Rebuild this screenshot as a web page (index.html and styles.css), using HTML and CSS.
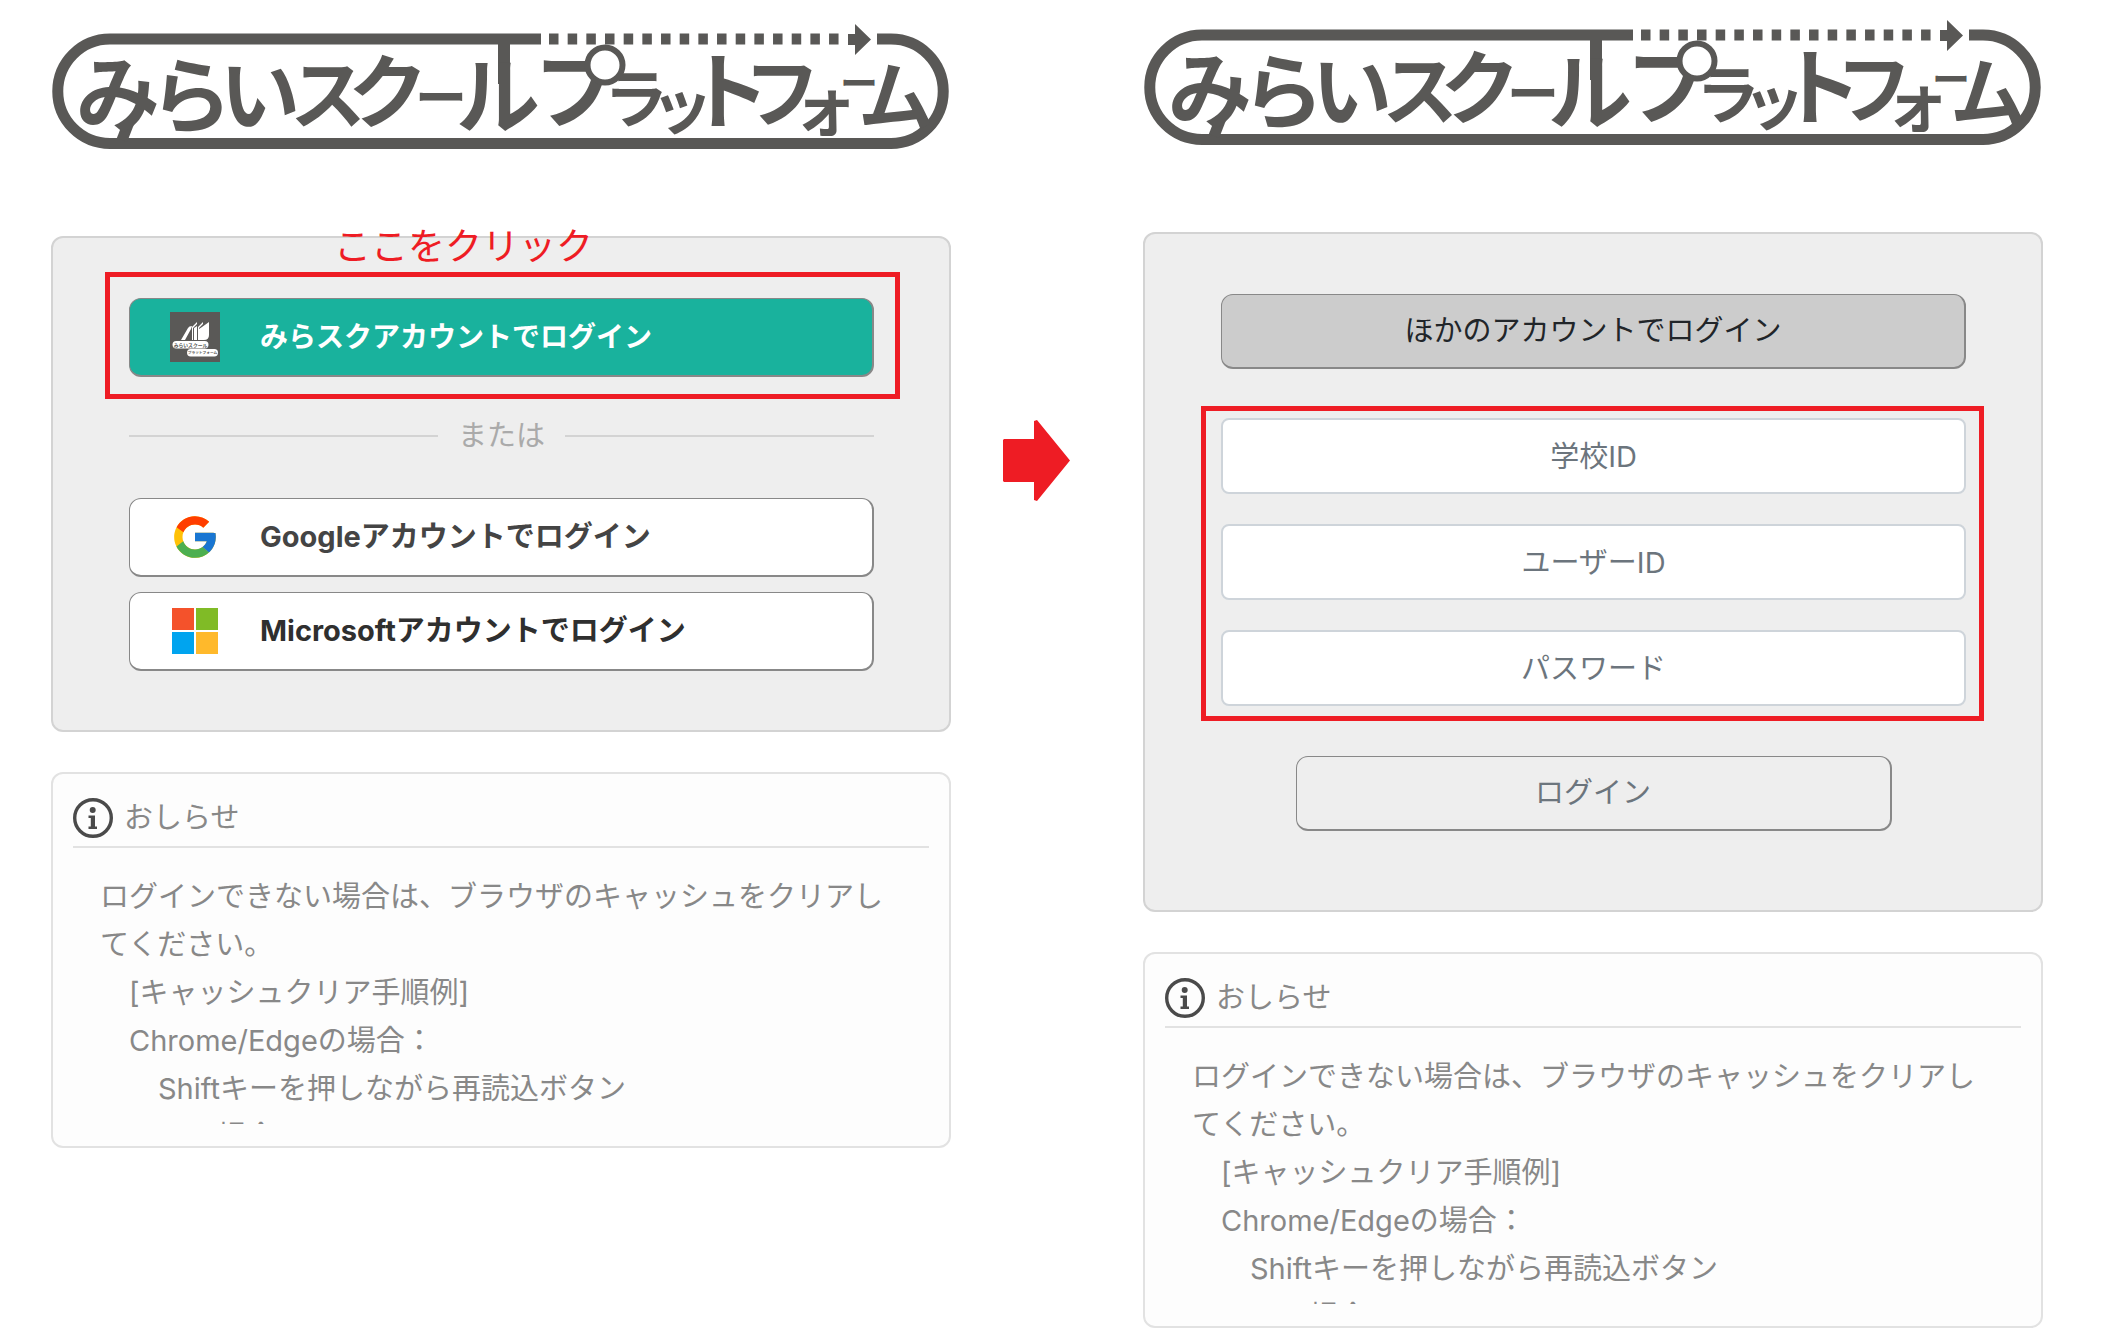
FILE: index.html
```html
<!DOCTYPE html>
<html lang="ja">

<head>
    <meta charset="UTF-8">
    <meta name="viewport" content="width=device-width, initial-scale=1.0">
    <title>みらいスクールプラットフォーム</title>
    <link rel="stylesheet" href="styles.css">
</head>

<body>
    <div class="page">
        <div class="column column-select">
            <svg class="logo" viewBox="0 0 900 130">
                <g fill="none" stroke="#595856" stroke-width="11">
                    <path d="M490 15H59a52 52 0 0 0 0 104.500H840a52 52 0 0 0 0-104.500H826" />
                    <path d="M498 15H790" stroke-dasharray="9.500 9.170" />
                    <path d="M453 15V60" stroke-width="12" />
                    <path d="M78 98L71 116" />
                </g>
                <path d="M797 10h7V0l16 15.500L804 31V21h-7z" fill="#595856" />
                <text class="logo-text"><tspan x="25" y="102" font-size="84">み</tspan><tspan x="99" y="102" font-size="82">ら</tspan><tspan x="169" y="100" font-size="80">い</tspan><tspan x="239" y="99" font-size="76">ス</tspan><tspan x="297" y="97" font-size="80">ク</tspan><tspan x="364" y="93" font-size="52">ー</tspan><tspan x="405" y="103" font-size="84">ル</tspan><tspan x="484" y="97" font-size="84">プ</tspan><tspan x="553" y="98" font-size="64">ラ</tspan><tspan x="600" y="105" font-size="62">ッ</tspan><tspan x="635" y="98" font-size="84">ト</tspan><tspan x="693" y="97" font-size="76">フ</tspan><tspan x="742" y="106" font-size="64">ォ</tspan><tspan x="789" y="73" font-size="38">ー</tspan><tspan x="807" y="101" font-size="76">ム</tspan></text>
                <circle cx="554" cy="41" r="17.500" fill="#fff" stroke="#595856" stroke-width="6" />
            </svg>
            <div class="panel">
                <div class="target target-button">
                    <span class="callout">ここをクリック</span>
                    <button type="button" class="btn btn-account btn-mirai">
                        <svg class="icon" viewBox="0 0 50 50">
                            <path fill="#5a5957" d="M0 0h50v50H0z" />
                            <path fill="#fff" d="M11 28l7-12q1-2 4-2l-1 3-6 11zM22 15l5-5v2l-4 4v12h-1zM24 16l3-2v14h-3zM28 15l5-5v2l-4 4v12h-1zM29 17l3-2 7-5v13q0 5-5 5h-5z" />
                            <rect x="2.500" y="29" width="36" height="7.500" rx="3.700" fill="#fff" />
                            <rect x="17" y="37" width="31" height="7.500" rx="3.700" fill="#fff" />
                            <text x="20.500" y="34.500" font-size="4.800" class="icon-text">みらいスクール</text>
                            <text x="32.500" y="42.200" font-size="3.700" class="icon-text">プラットフォーム</text>
                        </svg>
                        <span>みらスクアカウントでログイン</span>
                    </button>
                </div>
                <div class="divider"><span>または</span></div>
                <div class="accounts">
                    <button type="button" class="btn btn-account btn-google">
                        <svg class="icon" viewBox="0 0 48 48">
                            <path fill="#FFC107" d="M43.611 20.083H42V20H24v8h11.303C33.654 32.657 29.223 36 24 36c-6.627 0-12-5.373-12-12s5.373-12 12-12c3.059 0 5.842 1.154 7.961 3.039l5.657-5.657C34.046 6.053 29.268 4 24 4 12.955 4 4 12.955 4 24s8.955 20 20 20 20-8.955 20-20c0-1.341-.138-2.650-.389-3.917z" />
                            <path fill="#FF3D00" d="M6.306 14.691l6.571 4.819C14.655 15.108 18.961 12 24 12c3.059 0 5.842 1.154 7.961 3.039l5.657-5.657C34.046 6.053 29.268 4 24 4 16.318 4 9.656 8.337 6.306 14.691z" />
                            <path fill="#4CAF50" d="M24 44c5.166 0 9.860-1.977 13.409-5.192l-6.190-5.238C29.211 35.091 26.715 36 24 36c-5.202 0-9.619-3.317-11.283-7.946l-6.522 5.025C9.505 39.556 16.227 44 24 44z" />
                            <path fill="#1976D2" d="M43.611 20.083H42V20H24v8h11.303c-.792 2.237-2.231 4.166-4.087 5.571l6.193 5.238C36.971 39.205 44 34 44 24c0-1.341-.138-2.650-.389-3.917z" />
                        </svg>
                        <span>Googleアカウントでログイン</span>
                    </button>
                    <button type="button" class="btn btn-account btn-microsoft">
                        <svg class="icon" viewBox="0 0 50 50">
                            <path fill="#f4522b" d="M2 2h22v22H2z" />
                            <path fill="#80bb26" d="M26 2h22v22H26z" />
                            <path fill="#00a4ef" d="M2 26h22v22H2z" />
                            <path fill="#ffb92b" d="M26 26h22v22H26z" />
                        </svg>
                        <span>Microsoftアカウントでログイン</span>
                    </button>
                </div>
            </div>
            <div class="notice">
                <h2 class="notice-title">
                    <svg class="info-icon" viewBox="0 0 40 40">
                        <circle cx="20" cy="20" r="18.300" fill="none" stroke="#4a4a4a" stroke-width="3.400" />
                        <circle cx="19.700" cy="12" r="3" fill="#4a4a4a" />
                        <path d="M15.500 17.500h6.500v11h2v2.500h-8.500v-2.500h2.300v-8.500h-2.300z" fill="#4a4a4a" />
                    </svg>
                    おしらせ
                </h2>
                <div class="notice-body">ログインできない場合は、ブラウザのキャッシュをクリアしてください。
　[キャッシュクリア手順例]
　Chrome/Edgeの場合：
　　Shiftキーを押しながら再読込ボタン
　iPadの場合：</div>
            </div>
        </div>

        <div class="next">
            <svg width="67" height="81" viewBox="0 0 67 81"><path fill="#ee1c24" d="M1 19h30V1l3-1 33 40.500L34 81l-3-1V62H1l-1-1V20z" /></svg>
        </div>

        <div class="column">
            <svg class="logo" viewBox="0 0 900 130">
                <g fill="none" stroke="#595856" stroke-width="11">
                    <path d="M490 15H59a52 52 0 0 0 0 104.500H840a52 52 0 0 0 0-104.500H826" />
                    <path d="M498 15H790" stroke-dasharray="9.500 9.170" />
                    <path d="M453 15V60" stroke-width="12" />
                    <path d="M78 98L71 116" />
                </g>
                <path d="M797 10h7V0l16 15.500L804 31V21h-7z" fill="#595856" />
                <text class="logo-text"><tspan x="25" y="102" font-size="84">み</tspan><tspan x="99" y="102" font-size="82">ら</tspan><tspan x="169" y="100" font-size="80">い</tspan><tspan x="239" y="99" font-size="76">ス</tspan><tspan x="297" y="97" font-size="80">ク</tspan><tspan x="364" y="93" font-size="52">ー</tspan><tspan x="405" y="103" font-size="84">ル</tspan><tspan x="484" y="97" font-size="84">プ</tspan><tspan x="553" y="98" font-size="64">ラ</tspan><tspan x="600" y="105" font-size="62">ッ</tspan><tspan x="635" y="98" font-size="84">ト</tspan><tspan x="693" y="97" font-size="76">フ</tspan><tspan x="742" y="106" font-size="64">ォ</tspan><tspan x="789" y="73" font-size="38">ー</tspan><tspan x="807" y="101" font-size="76">ム</tspan></text>
                <circle cx="554" cy="41" r="17.500" fill="#fff" stroke="#595856" stroke-width="6" />
            </svg>
            <form class="panel">
                <button type="button" class="btn btn-other">ほかのアカウントでログイン</button>
                <div class="target target-fields">
                    <input class="field" type="text" placeholder="学校ID" aria-label="学校ID">
                    <input class="field" type="text" placeholder="ユーザーID" aria-label="ユーザーID">
                    <input class="field" type="password" placeholder="パスワード" aria-label="パスワード">
                </div>
                <button type="button" class="btn btn-login">ログイン</button>
            </form>
            <div class="notice">
                <h2 class="notice-title">
                    <svg class="info-icon" viewBox="0 0 40 40">
                        <circle cx="20" cy="20" r="18.300" fill="none" stroke="#4a4a4a" stroke-width="3.400" />
                        <circle cx="19.700" cy="12" r="3" fill="#4a4a4a" />
                        <path d="M15.500 17.500h6.500v11h2v2.500h-8.500v-2.500h2.300v-8.500h-2.300z" fill="#4a4a4a" />
                    </svg>
                    おしらせ
                </h2>
                <div class="notice-body">ログインできない場合は、ブラウザのキャッシュをクリアしてください。
　[キャッシュクリア手順例]
　Chrome/Edgeの場合：
　　Shiftキーを押しながら再読込ボタン
　iPadの場合：</div>
            </div>
        </div>
    </div>
</body>

</html>
```
FILE: styles.css
```css
* {
    box-sizing: border-box;
}

body {
    margin: 0;
    background: #fff;
    color: #888;
    font-family: Inter, "Noto Sans CJK JP", sans-serif;
    font-size: 29px;
    line-height: 44px;
}

.page {
    display: flex;
    align-items: flex-start;
    padding: 20px 64px 0 51px;
}

.column {
    flex: 1;
    min-width: 0;
}

.column-select {
    padding-top: 4px;
}

.logo {
    display: block;
    width: 100%;
    margin-bottom: 82px;
}

.logo-text {
    fill: #595856;
    font-family: "Noto Sans CJK JP", sans-serif;
    font-weight: bold;
}

/* ログイン枠 */
.panel {
    padding: 60px 75px 59px 76px;
    background: #eee;
    border: 2px solid #d3d3d3;
    border-radius: 12px;
}

.btn {
    display: block;
    width: 100%;
    margin: 0;
    padding: 14px 20px;
    border: solid #888;
    border-width: 1px 2px 2px 1px;
    border-radius: 12px;
    background: transparent;
    font: inherit;
    text-align: center;
    cursor: pointer;
}

.btn-account {
    display: flex;
    align-items: center;
    gap: 40px;
    padding: 13px 40px;
    background: #fff;
    font-weight: bold;
}

.btn-mirai {
    background: #19b29d;
    color: #fff;
    font-size: 28px;
}

.btn-google {
    color: #444;
}

.btn-microsoft {
    color: #2f2f2f;
}

.btn-other {
    background: #ccc;
    color: #212529;
}

.btn-login {
    width: 80%;
    margin: 50px auto 20px;
    color: #6c757d;
}

.icon {
    flex: none;
    width: 50px;
    height: 50px;
}

.icon-text {
    fill: #5a5957;
    font-family: "Noto Sans CJK JP", sans-serif;
    font-weight: bold;
    text-anchor: middle;
}

.accounts {
    display: flex;
    flex-direction: column;
    gap: 15px;
}

.divider {
    display: flex;
    align-items: center;
    gap: 20px;
    margin: 37px 0 40px;
    color: #aaa;
}

.divider::before,
.divider::after {
    content: "";
    flex: 1;
    height: 2px;
    background: #d3d3d3;
}

.field {
    display: block;
    width: 100%;
    height: 76px;
    padding: 14px 20px;
    border: 2px solid #ced4da;
    border-radius: 8px;
    background: #fff;
    font: inherit;
    text-align: center;
}

.field::placeholder {
    color: #6c757d;
    opacity: 1;
}

/* 赤枠 */
.target {
    position: relative;
}

.target::after {
    content: "";
    position: absolute;
    border: 5px solid #ee1c24;
    pointer-events: none;
}

.target-button::after {
    inset: -26px -26px -22px -24px;
}

.target-fields {
    display: flex;
    flex-direction: column;
    gap: 30px;
    margin-top: 49px;
}

.target-fields::after {
    inset: -12px -18px -15px -20px;
}

.callout {
    position: absolute;
    top: -74px;
    left: 205px;
    color: #ee1c24;
    font-family: "Noto Sans CJK JP", sans-serif;
    font-size: 37px;
    font-weight: normal;
    line-height: 40px;
    white-space: nowrap;
}

.next {
    flex: none;
    width: 192px;
    padding: 400px 0 0 52px;
}

.next svg {
    display: block;
}

/* おしらせ */
.notice {
    margin-top: 40px;
    padding: 24px 20px 22px;
    background: #fdfdfd;
    border: 2px solid #e2e2e2;
    border-radius: 12px;
}

.notice-title {
    display: flex;
    align-items: center;
    gap: 11px;
    margin: 0 0 25px;
    padding-bottom: 8px;
    border-bottom: 2px solid #e2e2e2;
    font-size: 29px;
    font-weight: normal;
    line-height: 40px;
}

.info-icon {
    width: 40px;
    height: 40px;
}

.notice-body {
    height: 251px;
    padding: 0 27px;
    overflow: hidden;
    line-height: 48px;
    white-space: pre-wrap;
}
```
